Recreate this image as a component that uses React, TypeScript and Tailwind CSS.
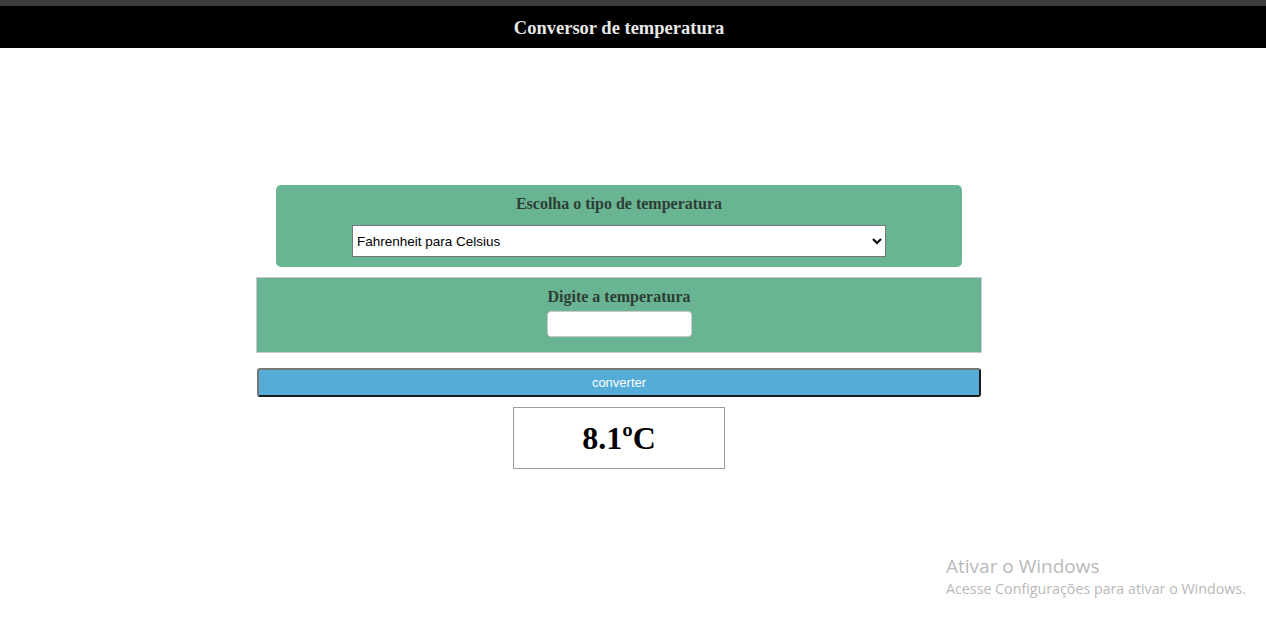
import { useState } from 'react';

export default function App() {
  const [tipo, setTipo] = useState('fc');
  const [valor, setValor] = useState('');
  const [resultado, setResultado] = useState('8.1ºC');

  const converter = () => {
    const n = parseFloat(valor);
    if (isNaN(n)) return;
    if (tipo === 'fc') setResultado(`${(((n - 32) * 5) / 9).toFixed(1)}ºC`);
    else setResultado(`${((n * 9) / 5 + 32).toFixed(1)}ºF`);
  };

  return (
    <div className="relative min-h-[631px] bg-white font-['Liberation_Serif',serif]">
      <div className="h-[6px] bg-[#3c3c3c]" />
      <header className="h-[42px] bg-black">
        <div className="flex h-full w-[1238px] items-center justify-center pt-[3px]">
          <h1 className="text-[18.5px] font-bold text-[#e8e8e8]">Conversor de temperatura</h1>
        </div>
      </header>

      <main className="flex w-[1238px] flex-col items-center pt-[137px]">
        <section className="flex w-[686px] flex-col items-center rounded-[5px] bg-[#69b492] pb-[10px] pt-[9px]">
          <h2 className="text-[16px] font-bold leading-[20px] text-[#2e3e36]">Escolha o tipo de temperatura</h2>
          <select
            value={tipo}
            onChange={(e) => setTipo(e.target.value)}
            className="mt-[11px] h-[32px] w-[534px] border border-[#767676] bg-white pl-0 font-['Liberation_Sans',sans-serif] text-[13.5px] text-black"
          >
            <option value="fc">Fahrenheit para Celsius</option>
            <option value="cf">Celsius para Fahrenheit</option>
          </select>
        </section>

        <section className="mt-[10px] flex h-[76px] w-[726px] flex-col items-center border border-[#c9c9c9] bg-[#69b492] pt-[9px]">
          <h2 className="text-[16px] font-bold leading-[20px] text-[#2e3e36]">Digite a temperatura</h2>
          <input
            type="text"
            value={valor}
            onChange={(e) => setValor(e.target.value)}
            className="mt-[4px] h-[26px] w-[145px] rounded-[4px] border border-[#c9c9c9] bg-white px-1 font-['Liberation_Sans',sans-serif] text-[13px] outline-none"
          />
        </section>

        <button
          onClick={converter}
          className="mt-[15px] h-[29px] w-[724px] rounded-[3px] border-2 border-[#777] border-b-[#1c1c1c] border-r-[#1c1c1c] bg-[#55acd6] font-['Liberation_Sans',sans-serif] text-[13px] text-white"
        >
          converter
        </button>

        <div className="mt-[10px] flex h-[62px] w-[212px] items-center justify-center border border-[#9a9a9a]">
          <span className="text-[32px] font-bold leading-none text-black">{resultado}</span>
        </div>
      </main>

      <div className="absolute left-[946px] top-[553px] font-['Open_Sans',sans-serif] text-[#b9b9b9]">
        <p className="text-[19px] leading-[26px]">Ativar o Windows</p>
        <p className="text-[14.25px] leading-[20px]">Acesse Configurações para ativar o Windows.</p>
      </div>
    </div>
  );
}
